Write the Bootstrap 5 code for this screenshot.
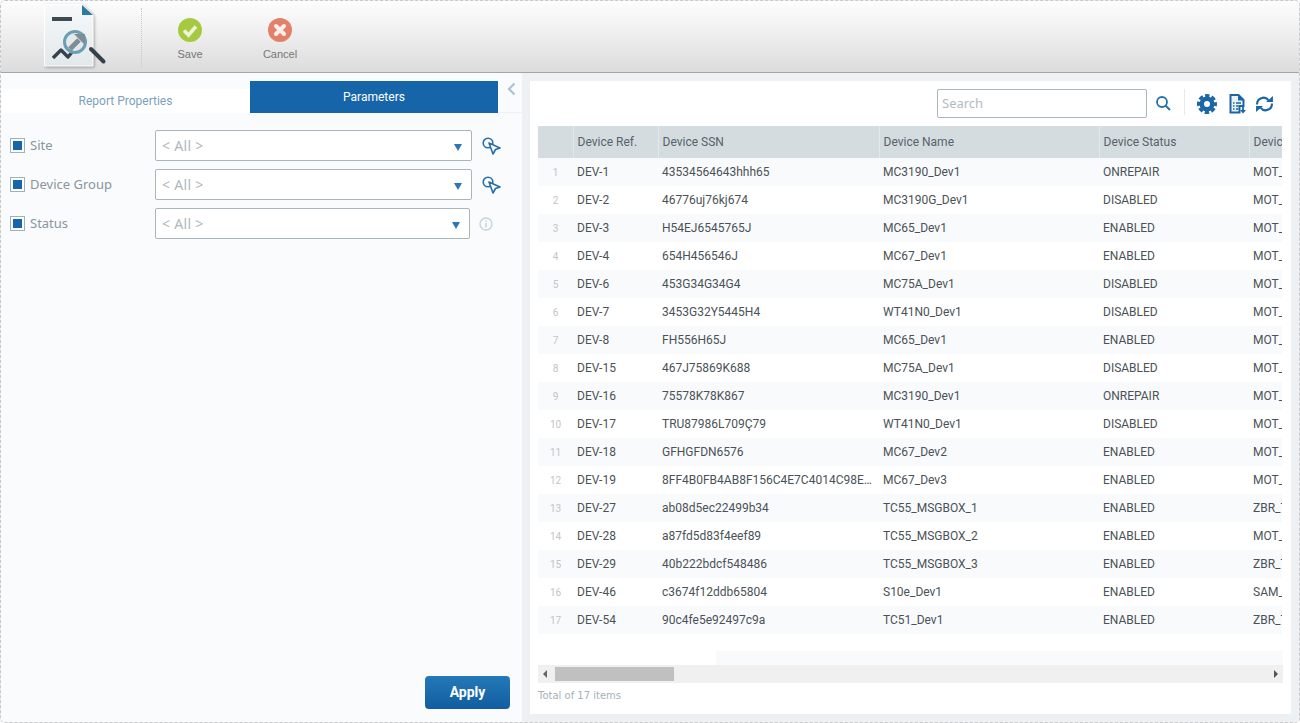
<!DOCTYPE html>
<html lang="en">
<head>
<meta charset="utf-8">
<title>Report</title>
<link href="https://cdn.jsdelivr.net/npm/bootstrap@5.3.0/dist/css/bootstrap.min.css" rel="stylesheet">
<style>
html,body{height:100%;margin:0;overflow:hidden;background:#fff}
body{font-family:Roboto,"Liberation Sans",sans-serif;font-size:12px;color:#4a5257}
.shell{width:1300px;height:723px;border:1px dashed #c9c9c9;border-radius:5px;overflow:hidden;background:#eef1f4}
.topbar{height:72px;flex:none;background:linear-gradient(#fdfdfd,#f4f4f4 30%,#dcdcdc);border-bottom:1px solid #a5a5a5;padding-left:43px}
.logo-box{width:64px;height:71px;flex:none}
.logo-page{filter:drop-shadow(1px 1px 1.5px rgba(0,0,0,.3))}
.tb-sep{width:0;height:60px;border-left:1px dotted #c8c8c8;margin:7px 0 0 33px}
.tb-btn{width:90px;font:11px "Liberation Sans",Arial,sans-serif;color:#777;padding-top:17px}
.tb-btn svg{display:block;margin-bottom:6px}
.tb-first{margin-left:3px}
.main-row{height:649px}
.left-pane{width:521px;flex:none;background:#f9fbfd;position:relative}
.tabs-row{height:40px;padding-top:8px;border-bottom:1px solid #eef1f5}
.tab-a{width:249px;margin-top:8px;height:24px;background:#fff;color:#7c9fc0;line-height:24px;text-align:center}
.tab-b{width:248px;height:32px;background:#1565a8;color:#fff;line-height:33px;text-align:center}
.collapse-ico{margin:0 0 0 9px;height:16px}
.param-list{padding:17px 0 0 9px;gap:8px}
.param{height:31px}
.chk{width:15px;height:15px;border:1px solid #9fb0bf;padding:2px;background:#fff;flex:none}
.chk i{display:block;width:100%;height:100%;background:#1565a8}
.p-label{width:125px;margin-left:5px;padding-bottom:2px;font:13px "Noto Sans","Open Sans",sans-serif;color:#8a959c;flex:none}
.fake-select{width:317px;height:31px;border:1px solid #a9b4bb;border-radius:2px;background:#fff;padding:0 9px 0 6px;font:14px "Noto Sans","Open Sans",sans-serif;letter-spacing:.3px;color:#b0b7bc;flex:none}
.fake-select.narrow{width:315px}
.caret-tri{width:0;height:0;margin-top:3px;border-left:4.5px solid transparent;border-right:4.5px solid transparent;border-top:7px solid #2b76b4}
.side-ico{margin-left:10px;flex:none}
.info-ico{margin-left:9px;flex:none}
.apply-wrap{position:absolute;left:424px;top:603px}
.apply-btn{width:85px;height:33px;padding:0;border:0;border-radius:4px;background:linear-gradient(#2479b8,#115d9f);color:#fff;font-weight:700;font-size:14px}
.divider-gap{width:8px;flex:none}
.right-pane{width:761px;height:633px;margin-top:8px;background:#fff;flex:none;padding:0 8px}
.searchbar{height:45px;padding-top:8px}
.search-box{width:210px;height:29px;border:1px solid #a9b4bb;border-radius:2px;padding:0 4px;font-size:13px;color:#b3babf;line-height:27px;font-family:"Noto Sans","Open Sans",sans-serif}
.v-sep{width:1px;height:26px;background:#e6eaed;margin:0 12px}
.gear-ico{margin-right:12px;margin-top:5px}
.doc-ico{margin-right:7px;margin-top:5px}
.sync-ico{margin-right:9px;margin-top:7px}
.find-ico{margin-left:8px;margin-top:6px}
.grid-wrap{width:744px;height:525px;overflow:hidden}
.dgrid{table-layout:fixed;width:861px;border-collapse:collapse;margin:0}
.dgrid th{height:32px;background:#d5dce0;font-weight:400;color:#56626a;padding:0 4px 1px;border-left:1px solid #e3e8eb;white-space:nowrap;overflow:hidden}
.dgrid th:first-child{border-left:0}
.dgrid td{height:28px;padding:0 4px;color:#4a5257;white-space:nowrap;overflow:hidden;text-overflow:ellipsis;border:0;background:#fff}
.dgrid tbody tr:nth-child(odd) td{background:#f9fafc}
.dgrid td.num{font-size:10px;color:#c0c5c9;text-align:center;padding:1px 0 0}
.under-strip{height:14px;margin-left:178px;background:#f9fafc}
.hscroll{height:18px;background:#f0f0f0;padding:0 5px}
.thumb{width:119px;height:14px;background:#c0c0c0;margin-left:8px}
.arr-l{border-top:4px solid transparent;border-bottom:4px solid transparent;border-right:4px solid #666;width:0;height:0}
.arr-r{border-top:4px solid transparent;border-bottom:4px solid transparent;border-left:4px solid #555;width:0;height:0}
.total-txt{font:10px "DejaVu Sans",sans-serif;color:#a7b1b7;margin-top:7px}
</style>
</head>
<body>
<div class="shell d-flex flex-column">
  <div class="topbar d-flex">
    <div class="logo-box">
      <svg width="64" height="70" viewBox="0 0 64 70">
        <defs><linearGradient id="pg" x1="0" y1="0" x2="0" y2="1"><stop offset="0" stop-color="#f7f9fa"/><stop offset="1" stop-color="#e3e8eb"/></linearGradient></defs>
        <path class="logo-page" d="M.5 3.500H38L49 14V65H.5Z" fill="url(#pg)" stroke="#fff"/>
        <path d="M38 4L49 14H38Z" fill="#2c7ba6"/>
        <rect x="8" y="16" width="20" height="4" fill="#3d4a52"/>
        <path d="M9 57L17 49L24 56L29 50" fill="none" stroke="#36424a" stroke-width="3.400" stroke-linejoin="round"/>
        <path d="M47 48L59.500 60.500" stroke="#36424a" stroke-width="4" stroke-linecap="round"/>
        <circle cx="31" cy="41" r="10.500" fill="#dce6ea" fill-opacity=".6" stroke="#6b9fb4" stroke-width="3"/>
        <path d="M26 48L35 39" stroke="#7f8c93" stroke-width="5"/>
        <path d="M30 33H41V44Z" fill="#7f8c93"/>
      </svg>
    </div>
    <div class="tb-sep"></div>
    <div class="tb-btn tb-first d-flex flex-column align-items-center">
      <svg width="24" height="24" viewBox="0 0 24 24"><circle cx="12" cy="12" r="12" fill="#a6c940"/><path d="M6 12.500L10.500 17L18 8.500" fill="none" stroke="#eef4d6" stroke-width="3.600"/></svg>
      Save
    </div>
    <div class="tb-btn d-flex flex-column align-items-center">
      <svg width="24" height="24" viewBox="0 0 24 24"><circle cx="12" cy="12" r="12" fill="#e2806a"/><path d="M8 8L16 16M16 8L8 16" stroke="#fbeee9" stroke-width="4" stroke-linecap="round"/></svg>
      Cancel
    </div>
  </div>
  <div class="main-row d-flex">
    <div class="left-pane">
      <div class="tabs-row d-flex align-items-start">
        <div class="tab-a">Report Properties</div>
        <div class="tab-b">Parameters</div>
        <svg class="collapse-ico" width="9" height="15" viewBox="0 0 9 15"><path d="M7.500 2L2 7.500L7.500 13" fill="none" stroke="#a9c0d4" stroke-width="2"/></svg>
      </div>
      <div class="param-list d-flex flex-column">
        <div class="param d-flex align-items-center">
          <span class="chk"><i></i></span><span class="p-label">Site</span>
          <div class="fake-select d-flex align-items-center justify-content-between"><span>&lt; All &gt;</span><span class="caret-tri"></span></div>
          <svg class="side-ico" width="19" height="19" viewBox="0 0 19 19"><circle cx="6" cy="7" r="4.800" fill="none" stroke="#2a6ea9" stroke-width="1.600"/><path d="M7 7L18 12L13.500 13.500L11 18Z" fill="#f9fbfd" stroke="#2a6ea9" stroke-width="1.600" stroke-linejoin="round"/></svg>
        </div>
        <div class="param d-flex align-items-center">
          <span class="chk"><i></i></span><span class="p-label">Device Group</span>
          <div class="fake-select d-flex align-items-center justify-content-between"><span>&lt; All &gt;</span><span class="caret-tri"></span></div>
          <svg class="side-ico" width="19" height="19" viewBox="0 0 19 19"><circle cx="6" cy="7" r="4.800" fill="none" stroke="#2a6ea9" stroke-width="1.600"/><path d="M7 7L18 12L13.500 13.500L11 18Z" fill="#f9fbfd" stroke="#2a6ea9" stroke-width="1.600" stroke-linejoin="round"/></svg>
        </div>
        <div class="param d-flex align-items-center">
          <span class="chk"><i></i></span><span class="p-label">Status</span>
          <div class="fake-select narrow d-flex align-items-center justify-content-between"><span>&lt; All &gt;</span><span class="caret-tri"></span></div>
          <svg class="info-ico" width="14" height="14" viewBox="0 0 14 14"><circle cx="7" cy="7" r="6" fill="none" stroke="#c5d2dc" stroke-width="1.300"/><rect x="6.300" y="6" width="1.500" height="4.500" fill="#c5d2dc"/><rect x="6.300" y="3.500" width="1.500" height="1.500" fill="#c5d2dc"/></svg>
        </div>
      </div>
      <div class="apply-wrap"><button type="button" class="btn apply-btn">Apply</button></div>
    </div>
    <div class="divider-gap"></div>
    <div class="right-pane d-flex flex-column">
      <div class="searchbar d-flex align-items-start justify-content-end">
        <div class="search-box">Search</div>
        <svg class="find-ico" width="17" height="17" viewBox="0 0 17 17"><circle cx="7" cy="7" r="5" fill="none" stroke="#2173ad" stroke-width="1.800"/><path d="M10.500 10.500L15 15" stroke="#2173ad" stroke-width="2"/></svg>
        <div class="v-sep"></div>
        <svg class="gear-ico" width="20" height="20" viewBox="0 0 20 20"><circle cx="10" cy="10" r="5.250" fill="none" stroke="#1a66a6" stroke-width="4.500"/><circle cx="10" cy="10" r="8.500" fill="none" stroke="#1a66a6" stroke-width="3" stroke-dasharray="4.400 2.280" stroke-dashoffset="2.200"/></svg>
        <svg class="doc-ico" width="19" height="20" viewBox="0 0 19 20"><path d="M1.500 1H9.500L14.500 6V12H10.500V18.500H1.500Z" fill="#eaf1f7" stroke="#1a66a6" stroke-width="2"/><path d="M9 1V6.500H14.500Z" fill="#1a66a6"/><path d="M4 9H5.500M7 9H12M4 12H5.500M7 12H9.500M4 15H5.500M7 15H9.500" stroke="#1a66a6" stroke-width="1.500"/><path d="M14 12V17" stroke="#1a66a6" stroke-width="1.800"/><path d="M11 16H17L14 19.500Z" fill="#1a66a6"/></svg>
        <svg class="sync-ico" width="19" height="16" viewBox="0 0 18 15"><path d="M2 8A6 6 0 0 1 12.800 4" fill="none" stroke="#1a66a6" stroke-width="2"/><path d="M10.500 5.500H17V0Z" fill="#1a66a6"/><path d="M16 7A6 6 0 0 1 5.200 11" fill="none" stroke="#1a66a6" stroke-width="2"/><path d="M7.500 9.500H1V15Z" fill="#1a66a6"/></svg>
      </div>
      <div class="grid-wrap">
        <table class="dgrid">
          <colgroup><col style="width:35px"><col style="width:85px"><col style="width:221px"><col style="width:220px"><col style="width:150px"><col style="width:150px"></colgroup>
          <thead><tr><th></th><th>Device Ref.</th><th>Device SSN</th><th>Device Name</th><th>Device Status</th><th>Device Type</th></tr></thead>
          <tbody>
            <tr><td class="num">1</td><td>DEV-1</td><td>43534564643hhh65</td><td>MC3190_Dev1</td><td>ONREPAIR</td><td>MOT_MC3190</td></tr>
            <tr><td class="num">2</td><td>DEV-2</td><td>46776uj76kj674</td><td>MC3190G_Dev1</td><td>DISABLED</td><td>MOT_MC3190G</td></tr>
            <tr><td class="num">3</td><td>DEV-3</td><td>H54EJ6545765J</td><td>MC65_Dev1</td><td>ENABLED</td><td>MOT_MC65</td></tr>
            <tr><td class="num">4</td><td>DEV-4</td><td>654H456546J</td><td>MC67_Dev1</td><td>ENABLED</td><td>MOT_MC67</td></tr>
            <tr><td class="num">5</td><td>DEV-6</td><td>453G34G34G4</td><td>MC75A_Dev1</td><td>DISABLED</td><td>MOT_MC75A</td></tr>
            <tr><td class="num">6</td><td>DEV-7</td><td>3453G32Y5445H4</td><td>WT41N0_Dev1</td><td>DISABLED</td><td>MOT_WT41N0</td></tr>
            <tr><td class="num">7</td><td>DEV-8</td><td>FH556H65J</td><td>MC65_Dev1</td><td>ENABLED</td><td>MOT_MC65</td></tr>
            <tr><td class="num">8</td><td>DEV-15</td><td>467J75869K688</td><td>MC75A_Dev1</td><td>DISABLED</td><td>MOT_MC75A</td></tr>
            <tr><td class="num">9</td><td>DEV-16</td><td>75578K78K867</td><td>MC3190_Dev1</td><td>ONREPAIR</td><td>MOT_MC3190</td></tr>
            <tr><td class="num">10</td><td>DEV-17</td><td>TRU87986L709Ç79</td><td>WT41N0_Dev1</td><td>DISABLED</td><td>MOT_WT41N0</td></tr>
            <tr><td class="num">11</td><td>DEV-18</td><td>GFHGFDN6576</td><td>MC67_Dev2</td><td>ENABLED</td><td>MOT_MC67</td></tr>
            <tr><td class="num">12</td><td>DEV-19</td><td>8FF4B0FB4AB8F156C4E7C4014C98E8A3</td><td>MC67_Dev3</td><td>ENABLED</td><td>MOT_MC67</td></tr>
            <tr><td class="num">13</td><td>DEV-27</td><td>ab08d5ec22499b34</td><td>TC55_MSGBOX_1</td><td>ENABLED</td><td>ZBR_TC55</td></tr>
            <tr><td class="num">14</td><td>DEV-28</td><td>a87fd5d83f4eef89</td><td>TC55_MSGBOX_2</td><td>ENABLED</td><td>MOT_TC55</td></tr>
            <tr><td class="num">15</td><td>DEV-29</td><td>40b222bdcf548486</td><td>TC55_MSGBOX_3</td><td>ENABLED</td><td>ZBR_TC55</td></tr>
            <tr><td class="num">16</td><td>DEV-46</td><td>c3674f12ddb65804</td><td>S10e_Dev1</td><td>ENABLED</td><td>SAM_S10e</td></tr>
            <tr><td class="num">17</td><td>DEV-54</td><td>90c4fe5e92497c9a</td><td>TC51_Dev1</td><td>ENABLED</td><td>ZBR_TC51</td></tr>
          </tbody>
        </table>
      </div>
      <div class="under-strip"></div>
      <div class="hscroll d-flex align-items-center">
        <span class="arr-l"></span><div class="thumb"></div><span class="arr-r ms-auto"></span>
      </div>
      <div class="total-txt">Total of 17 items</div>
    </div>
  </div>
</div>
<script src="https://cdn.jsdelivr.net/npm/bootstrap@5.3.0/dist/js/bootstrap.bundle.min.js"></script>
</body>
</html>
